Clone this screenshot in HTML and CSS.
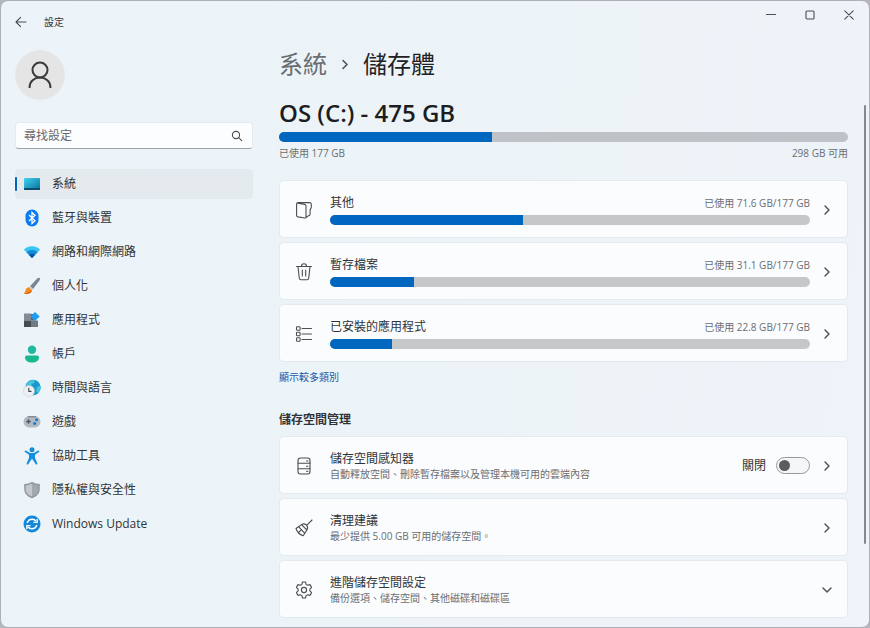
FILE: index.html
```html
<!DOCTYPE html>
<html lang="zh-Hant">
<head>
<meta charset="utf-8">
<meta name="viewport" content="width=device-width, initial-scale=1">
<title>設定</title>
<link rel="stylesheet" href="styles.css">
</head>
<body>
<div class="window">
  <header class="titlebar">
    <button class="back" type="button" aria-label="返回">
      <svg class="line" width="12" height="12" viewBox="0 0 12 12"><path d="M11 6H1.2M5.6 1.4L1 6l4.6 4.6"/></svg>
    </button>
    <span class="app-name">設定</span>
    <div class="window-controls">
      <button type="button" aria-label="最小化"><svg class="line" width="10" height="10" viewBox="0 0 10 10"><path d="M.5 4.500h9"/></svg></button>
      <button type="button" aria-label="最大化"><svg class="line" width="10" height="10" viewBox="0 0 10 10"><rect x="1" y="1" width="8" height="8" rx="1"/></svg></button>
      <button type="button" aria-label="關閉"><svg class="line" width="10" height="10" viewBox="0 0 10 10"><path d="M.8.8l8.4 8.4M9.2.8L.8 9.2"/></svg></button>
    </div>
  </header>

  <div class="content">
    <aside class="sidebar">
      <div class="avatar">
        <svg width="26" height="30" viewBox="0 0 26 30"><circle cx="13" cy="10" r="7.500"/><path d="M2.600 28v-1C2.600 21.400 7.300 17.500 13 17.500S23.400 21.400 23.400 27v1"/></svg>
      </div>
      <form class="search">
        <input type="search" aria-label="尋找設定" placeholder="尋找設定">
        <button type="submit" aria-label="搜尋"><svg class="line" width="12" height="12" viewBox="0 0 12 12"><circle cx="5" cy="5" r="3.600"/><path d="M7.700 7.700l3 3"/></svg></button>
      </form>
      <nav class="nav">
        <a class="active" href="#system">
          <svg width="18" height="18" viewBox="0 0 18 18"><defs><linearGradient id="sys" x1="0" y1="0" x2="1" y2="1"><stop offset="0" stop-color="#3fd3ee"/><stop offset="1" stop-color="#0a6f9e"/></linearGradient></defs><rect x="1" y="3" width="16" height="12" rx="1" fill="url(#sys)"/><path d="M1 13h16v1a1 1 0 0 1-1 1H2a1 1 0 0 1-1-1z" fill="#0b4d70"/></svg>
          系統</a>
        <a href="#bluetooth">
          <svg width="18" height="18" viewBox="0 0 18 18"><rect x="2.500" y=".5" width="13" height="17" rx="6.500" fill="#0a7cf0"/><path d="M6 6l6 5.800L9 14.500v-11l3 2.700L6 12" fill="none" stroke="#fff" stroke-width="1.300"/></svg>
          藍牙與裝置</a>
        <a href="#network">
          <svg width="18" height="18" viewBox="0 0 18 18"><path d="M.8 6.500C5.500 2 12.500 2 17.200 6.500L9 15z" fill="#35c5f2"/><path d="M3.400 9.200c3.200-3 8-3 11.200 0L9 15z" fill="#1688d8"/><path d="M6 11.900c1.700-1.500 4.300-1.500 6 0L9 15z" fill="#0a55a6"/></svg>
          網路和網際網路</a>
        <a href="#personal">
          <svg width="18" height="18" viewBox="0 0 18 18"><path d="M16.500 1c.9.8.5 1.700-.2 2.700L10 12l-3-2.800 7-7.500c.8-.8 1.700-1.300 2.500-.7z" fill="#768695"/><path d="M7.200 9l3 2.900-1.100 1.300-3.200-2.900z" fill="#c4cbd1"/><path d="M5.700 10.200l3.300 3c-.5 3.300-4.800 4.600-8.500 3.400 2.600-1 1.200-5.900 5.200-6.400z" fill="#f28a1c"/><path d="M.5 16.600c3.700 1.200 8-.1 8.500-3.400-1.300 1.200-4.400 3.100-8.500 3.400z" fill="#d85a13"/></svg>
          個人化</a>
        <a href="#apps">
          <svg width="18" height="18" viewBox="0 0 18 18"><path d="M1 2.500h7v7H1z" fill="#858b92"/><path d="M1 9.500h7V16H1z" fill="#474d54"/><path d="M8 9.500h7V16H8z" fill="#737980"/><path d="M8 3h4v6.500H8z" fill="#5e656d"/><path d="M12 1l4.700 4.500-4.700 4.600-4.500-4.600z" fill="#1c9df0"/></svg>
          應用程式</a>
        <a href="#accounts">
          <svg width="18" height="18" viewBox="0 0 18 18"><circle cx="9" cy="4.700" r="4.200" fill="#20b9a0"/><path d="M4 10.500h10c1.300 0 2 .8 2 2 0 3-3 5-7 5s-7-2-7-5c0-1.200.7-2 2-2z" fill="#18b990"/></svg>
          帳戶</a>
        <a href="#time">
          <svg width="18" height="18" viewBox="0 0 18 18"><circle cx="10" cy="8.500" r="7.700" fill="#1798cf"/><path d="M4 3.700C6 1.500 8.500.8 11 .9l1 2.600-3 1.500-2 3-4.500-2.500zM14 8l3.500-1.500c.5 3-.5 5.500-2.500 7.500l-2-2z" fill="#47c4dc"/><circle cx="6" cy="12" r="5.500" fill="#eef0f2" stroke="#c8cfd5" stroke-width=".6"/><path d="M5.800 8.800v3.600h2.700" fill="none" stroke="#44494f" stroke-width="1.100"/></svg>
          時間與語言</a>
        <a href="#gaming">
          <svg width="18" height="18" viewBox="0 0 18 18"><rect x=".5" y="3" width="17" height="11.500" rx="5.700" fill="#b2b9c1"/><path d="M4.500 3h9l-1 1.500h-7z" fill="#838c95"/><path d="M5.500 6.300v4.400M3.300 8.500h4.400" stroke="#4a525a" stroke-width="1.300"/><circle cx="13.600" cy="6.800" r="1.500" fill="#1679d4"/><circle cx="11.700" cy="10.400" r="1.500" fill="#1679d4"/></svg>
          遊戲</a>
        <a href="#access">
          <svg width="18" height="18" viewBox="0 0 18 18"><circle cx="9" cy="2.800" r="2.500" fill="#168ee0"/><path d="M2.800 3.600L7 6h4l4.200-2.400c1-.4 1.700.9.800 1.500l-4 2.700V11l2.300 5.300c.4 1.200-1.100 1.700-1.700.7L9.500 12.300h-1L5.400 17c-.6 1-2.100.5-1.700-.7L6 11V7.800L2 5.100c-.9-.6-.2-1.900.8-1.500z" fill="#168ee0"/></svg>
          協助工具</a>
        <a href="#privacy">
          <svg width="18" height="18" viewBox="0 0 18 18"><path d="M9 .8c2.500 1.700 5 2.200 7.800 2.200v5c0 4.500-3 7.400-7.800 9.300C4.200 15.400 1.200 12.500 1.200 8V3C4 3 6.500 2.500 9 .8z" fill="#92979c"/><path d="M9 2.600c2.100 1.200 4 1.700 6.300 1.800V8c0 3.600-2.400 6-6.300 7.600z" fill="#a4a9ae"/><path d="M9 2.600C6.900 3.800 5 4.300 2.700 4.400V8c0 3.600 2.400 6 6.300 7.600z" fill="#c4c8cc"/></svg>
          隱私權與安全性</a>
        <a href="#update">
          <svg width="18" height="18" viewBox="0 0 18 18"><circle cx="9" cy="9" r="8.500" fill="#1387dc"/><path d="M4.200 8C5 5.500 7 4.200 9.200 4.200c1.700 0 3 .8 4 2M13.800 10c-.8 2.500-2.800 3.800-5 3.800-1.700 0-3-.8-4-2" fill="none" stroke="#fff" stroke-width="1.500"/><path d="M14.200 3.700v3.700h-3.700M3.800 14.300v-3.700h3.700" fill="none" stroke="#fff" stroke-width="1.300"/></svg>
          Windows Update</a>
      </nav>
    </aside>

    <main class="main">
      <h1 class="breadcrumb">
        <a href="#system">系統</a>
        <svg class="line" width="8" height="12" viewBox="0 0 8 12"><path d="M2 2.500L6 6.500l-4 4"/></svg>
        <span>儲存體</span>
      </h1>
      <section class="drive">
        <h2>OS (C:) - 475 GB</h2>
        <div class="bar" role="progressbar" aria-label="已使用" aria-valuenow="37"><div class="fill" style="width:37.400%"></div></div>
        <div class="drive-labels"><span>已使用 177 GB</span><span>298 GB 可用</span></div>
      </section>

      <div class="cards">
        <a class="card" href="#other">
          <svg class="line" width="18" height="18" viewBox="0 0 18 18"><path d="M2.800 2.200l6.800 1.200c.9.200 1.400.7 1.400 1.600v11c0 .8-.6 1.200-1.400 1L3 15.900c-.9-.2-1.400-.7-1.400-1.500V3c0-1 .5-1.400 1.400-1.400h11.500c1.200 0 1.800.7 1.800 1.700v3c0 1-.8 1.500-1.200 2.300v4.600c0 1-.7 1.600-1.700 1.600L11 16.600"/></svg>
          <div class="usage">
            <div class="usage-text"><span class="title">其他</span><span class="note">已使用 71.6 GB/177 GB</span></div>
            <div class="bar"><div class="fill" style="width:40.300%"></div></div>
          </div>
          <svg class="line chevron" width="12" height="12" viewBox="0 0 12 12"><path d="M4 2l4 4-4 4"/></svg>
        </a>
        <a class="card" href="#temp">
          <svg class="line" width="18" height="18" viewBox="0 0 18 18"><path d="M1.500 3.500h15M6.500 3.300a2.500 2.500 0 0 1 5 0M3 3.700l1.300 11.600c.1 1 .7 1.500 1.600 1.500h6.200c.9 0 1.500-.5 1.600-1.500L15 3.700M7.300 7v6M10.700 7v6"/></svg>
          <div class="usage">
            <div class="usage-text"><span class="title">暫存檔案</span><span class="note">已使用 31.1 GB/177 GB</span></div>
            <div class="bar"><div class="fill" style="width:17.600%"></div></div>
          </div>
          <svg class="line chevron" width="12" height="12" viewBox="0 0 12 12"><path d="M4 2l4 4-4 4"/></svg>
        </a>
        <a class="card" href="#installed">
          <svg class="line" width="18" height="18" viewBox="0 0 18 18"><rect x="1.500" y="1.700" width="3.600" height="3.600" rx=".8"/><rect x="1.500" y="7.200" width="3.600" height="3.600" rx=".8"/><rect x="1.500" y="12.700" width="3.600" height="3.600" rx=".8"/><path d="M7 3.500h9.500M7 9h9.500M7 14.500h9.500"/></svg>
          <div class="usage">
            <div class="usage-text"><span class="title">已安裝的應用程式</span><span class="note">已使用 22.8 GB/177 GB</span></div>
            <div class="bar"><div class="fill" style="width:12.900%"></div></div>
          </div>
          <svg class="line chevron" width="12" height="12" viewBox="0 0 12 12"><path d="M4 2l4 4-4 4"/></svg>
        </a>
      </div>
      <a class="more" href="#more">顯示較多類別</a>

      <h3>儲存空間管理</h3>
      <div class="cards">
        <div class="card">
          <svg class="line" width="18" height="18" viewBox="0 0 18 18"><rect x="3" y="1" width="12" height="16" rx="2.500"/><path d="M3 6.300h12M3 11.700h12M11.500 4h1.500M11.500 9.200h1.500M11.500 14.300h1.500"/></svg>
          <div class="info"><span class="title">儲存空間感知器</span><span class="note">自動釋放空間、刪除暫存檔案以及管理本機可用的雲端內容</span></div>
          <label class="toggle"><span>關閉</span><input type="checkbox" role="switch" aria-label="儲存空間感知器"></label>
          <svg class="line chevron" width="12" height="12" viewBox="0 0 12 12"><path d="M4 2l4 4-4 4"/></svg>
        </div>
        <a class="card" href="#cleanup">
          <svg class="line" width="18" height="18" viewBox="0 0 18 18"><path d="M17 1l-5.400 5.400M6.500 5.600c1.600-1 3.600-.8 4.900.5s1.500 3.300.5 4.900l-3.700 5.700c-3.300-1-6.200-3.900-7.200-7.200zM6.500 5.600l5.400 5.400M3.600 7.600l6 6.600M4 13l1.800-1.600"/></svg>
          <div class="info"><span class="title">清理建議</span><span class="note">最少提供 5.00 GB 可用的儲存空間。</span></div>
          <svg class="line chevron" width="12" height="12" viewBox="0 0 12 12"><path d="M4 2l4 4-4 4"/></svg>
        </a>
        <a class="card" href="#advanced">
          <svg class="line" width="18" height="18" viewBox="0 0 18 18"><circle cx="9" cy="9" r="2.600"/><path d="M7.500 1h3l.6 2.400 1.500.9 2.400-.7 1.600 2.700-1.700 1.800v1.800l1.700 1.800-1.600 2.700-2.400-.7-1.500.9-.6 2.400h-3l-.6-2.400-1.500-.9-2.400.7-1.600-2.700 1.700-1.800V8.100L1.400 6.300 3 3.600l2.400.7 1.500-.9z"/></svg>
          <div class="info"><span class="title">進階儲存空間設定</span><span class="note">備份選項、儲存空間、其他磁碟和磁碟區</span></div>
          <svg class="line chevron" width="12" height="12" viewBox="0 0 12 12"><path d="M2 4l4 4 4-4"/></svg>
        </a>
      </div>
    </main>
  </div>
  <div class="scrollbar"></div>
</div>
</body>
</html>
```
FILE: styles.css
```css
* {
  box-sizing: border-box;
}

body {
  margin: 0;
  background: #b4b6bc;
  color: #303438;
  font: 12px/16px "Open Sans", "Noto Sans CJK TC", sans-serif;
}

a {
  color: inherit;
  text-decoration: none;
}

button {
  display: flex;
  align-items: center;
  justify-content: center;
  padding: 0;
  border: 0;
  background: none;
  color: inherit;
}

svg {
  display: block;
  flex: none;
}

.line {
  fill: none;
  stroke: #4a4e52;
  stroke-width: 1.1;
  stroke-linecap: round;
  stroke-linejoin: round;
}

.window {
  position: relative;
  min-height: 100vh;
  border: 1px solid #aeb1b8;
  border-radius: 8px;
  background: linear-gradient(100deg, #ecf4f9 0%, #edf3f7 70%, #eff3fa 100%);
}

.titlebar {
  display: flex;
  align-items: center;
  height: 41px;
  padding-left: 10px;
}

.back {
  width: 20px;
  height: 20px;
}

.app-name {
  flex: 1;
  margin-left: 13px;
  font-size: 10px;
}

.window-controls {
  display: flex;
  align-self: flex-start;
  padding-right: 1px;
}

.window-controls button {
  width: 39px;
  height: 27px;
}

.content {
  display: flex;
  gap: 26px;
  padding: 0 21px 9px 14px;
}

.sidebar {
  flex: none;
  width: 238px;
  padding-top: 8px;
}

.avatar {
  display: flex;
  align-items: center;
  justify-content: center;
  width: 50px;
  height: 50px;
  border-radius: 50%;
  background: #e5e5e5;
}

.avatar svg {
  fill: none;
  stroke: #3b3b3b;
  stroke-width: 2;
}

.search {
  display: flex;
  height: 27px;
  margin: 22px 0 20px;
  border: 1px solid #e4e9ee;
  border-bottom-color: #9da2a7;
  border-radius: 4px;
  background: #fcfdfe;
}

.search input {
  flex: 1;
  min-width: 0;
  padding: 0 8px;
  border: 0;
  outline: 0;
  background: none;
  font: inherit;
}

.search input::placeholder {
  color: #65696d;
}

.search button {
  width: 30px;
}

.nav {
  display: flex;
  flex-direction: column;
  gap: 4px;
}

.nav a {
  display: flex;
  align-items: center;
  gap: 11px;
  height: 30px;
  padding-left: 8px;
  border-radius: 4px;
}

.nav .active {
  position: relative;
  background: #e5eaee;
}

.nav .active::before {
  content: "";
  position: absolute;
  left: 0;
  width: 2px;
  height: 14px;
  border-radius: 1px;
  background: #0067c0;
}

.main {
  flex: 1;
  min-width: 0;
  padding-top: 6px;
}

h1,
h2,
h3 {
  margin: 0;
}

.breadcrumb {
  display: flex;
  align-items: center;
  gap: 14px;
  color: #1f2225;
  font-size: 24px;
  font-weight: 400;
  line-height: 32px;
}

.breadcrumb a {
  color: #6a6e72;
}

.breadcrumb svg {
  stroke-width: 1.5;
}

.drive {
  margin: 17px 0 20px;
}

.drive h2 {
  margin-bottom: 3px;
  color: #1b1d20;
  font-size: 24px;
  font-weight: 600;
  line-height: 32px;
}

.bar {
  height: 10px;
  overflow: hidden;
  border-radius: 5px;
  background: #c6c7c8;
}

.drive .bar {
  background: #bfc2c6;
}

.fill {
  height: 100%;
  background: #0067c0;
}

.drive-labels {
  display: flex;
  justify-content: space-between;
  margin-top: 4px;
  color: #6a6e72;
  font-size: 10px;
  line-height: 14px;
}

.cards {
  display: flex;
  flex-direction: column;
  gap: 4px;
}

.card {
  display: flex;
  align-items: center;
  height: 58px;
  padding: 1px 14px 0 15px;
  border: 1px solid #e4e9ee;
  border-radius: 4px;
  background: #fbfcfe;
}

.usage,
.info {
  flex: 1;
  min-width: 0;
  margin-left: 17px;
}

.usage-text {
  display: flex;
  align-items: center;
  justify-content: space-between;
  margin-bottom: 4px;
}

.info {
  display: flex;
  flex-direction: column;
}

.note {
  color: #6a6e72;
  font-size: 10px;
  line-height: 14px;
}

.chevron {
  margin-left: 11px;
  stroke-width: 1.4;
}

.toggle {
  display: flex;
  align-items: center;
  gap: 10px;
}

.toggle input {
  display: flex;
  align-items: center;
  width: 34px;
  height: 17px;
  margin: 0;
  padding: 0 2px;
  border: 1px solid #96989b;
  border-radius: 9px;
  background: #f5f6f7;
  appearance: none;
}

.toggle input::before {
  content: "";
  width: 11px;
  height: 11px;
  border-radius: 50%;
  background: #5c5c5c;
}

.toggle input:checked {
  justify-content: flex-end;
  background: #0067c0;
}

.more {
  display: block;
  width: fit-content;
  margin: 7px 0 27px;
  color: #1a56a8;
  font-size: 10px;
}

h3 {
  margin-bottom: 8px;
  font-size: 12px;
  font-weight: 700;
}

.scrollbar {
  position: absolute;
  top: 104px;
  right: 3px;
  bottom: 83px;
  width: 2px;
  border-radius: 1px;
  background: #85888c;
}
```
